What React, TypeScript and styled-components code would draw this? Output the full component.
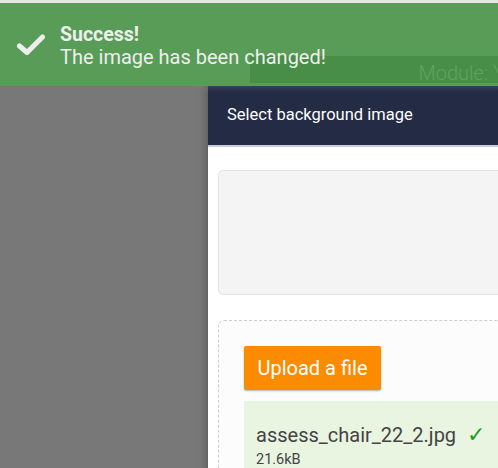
import React from "react";
import styled, { createGlobalStyle } from "styled-components";

const Global = createGlobalStyle`
  html, body { margin: 0; padding: 0; }
  body {
    background: #787878;
    font-family: Roboto, "Liberation Sans", Arial, sans-serif;
    overflow: hidden;
  }
`;

const Screen = styled.div`
  position: relative;
  width: 498px;
  height: 468px;
  overflow: hidden;
  background: #787878;
  border-top: 3px solid #e6e6e6;
  box-sizing: border-box;
`;

const Modal = styled.div`
  position: absolute;
  left: 208px;
  top: 83px;
  width: 340px;
  background: #ffffff;
  box-shadow: 0 0 10px rgba(0, 0, 0, 0.35);
  display: flex;
  flex-direction: column;
`;

const ModalHeader = styled.div`
  flex-shrink: 0;
  height: 61px;
  box-sizing: border-box;
  padding-left: 19px;
  padding-bottom: 3px;
  display: flex;
  align-items: center;
  background: linear-gradient(#3a4258 0px, #232b45 6px, #232b45 100%);
  border-bottom: 2px solid #c9ced8;
  color: #ffffff;
  font-size: 16.5px;
`;

const ModalBody = styled.div`
  padding: 23px 0 0 10px;
  display: flex;
  flex-direction: column;
  gap: 25px;
`;

const Preview = styled.div`
  flex-shrink: 0;
  height: 125px;
  box-sizing: border-box;
  background: #f4f4f4;
  border: 1px solid #e3e3e3;
  border-radius: 5px;
`;

const DropZone = styled.div`
  flex-shrink: 0;
  box-sizing: border-box;
  border: 1px dashed #cfcfcf;
  border-radius: 6px;
  background: #fcfcfc;
  padding: 25px 0 0 25px;
  display: flex;
  flex-direction: column;
  align-items: flex-start;
  gap: 11px;
`;

const UploadButton = styled.button`
  flex-shrink: 0;
  width: 137px;
  height: 44px;
  border: none;
  border-radius: 2px;
  background: #fb8b00;
  color: #ffffff;
  font-family: Roboto, "Liberation Sans", Arial, sans-serif;
  font-size: 20px;
  padding: 0;
  box-shadow: 0 1px 2px rgba(0, 0, 0, 0.3);
  cursor: pointer;
`;

const FileRow = styled.div`
  align-self: stretch;
  background: #e9f5e1;
  padding: 22px 0 0 12px;
  height: 120px;
  display: flex;
  flex-direction: column;
`;

const FileName = styled.div`
  font-size: 20px;
  color: #444444;
  display: flex;
  align-items: center;
  gap: 11px;
  line-height: 24px;
`;

const Check = styled.span`
  color: #1f9a1f;
  font-family: "DejaVu Sans", sans-serif;
  font-size: 22px;
  font-weight: 300;
`;

const FileSize = styled.div`
  font-size: 14.5px;
  color: #444444;
  margin-top: 4px;
`;

const Toast = styled.div`
  position: absolute;
  left: 0;
  top: 0;
  width: 498px;
  height: 83px;
  background: #589c58;
  display: flex;
  align-items: center;
  gap: 14px;
  padding-left: 16px;
  box-sizing: border-box;
  color: #eeeeee;
`;

const UnderBar = styled.div`
  position: absolute;
  left: 250px;
  top: 53px;
  width: 260px;
  height: 27px;
  background: #488d48;
  display: flex;
  justify-content: flex-end;
  align-items: flex-end;
  overflow: hidden;
`;

const UnderText = styled.span`
  color: #5fa35f;
  font-size: 20px;
  font-weight: 300;
  white-space: nowrap;
  margin-right: 5px;
  line-height: 24px;
  margin-bottom: -2px;
`;

const ToastText = styled.div`
  display: flex;
  flex-direction: column;
  position: relative;
  margin-top: 2px;
`;

const ToastTitle = styled.div`
  font-weight: 700;
  font-size: 19.5px;
  line-height: 22px;
`;

const ToastMessage = styled.div`
  font-size: 20px;
  line-height: 22px;
`;

export default function App() {
  return (
    <>
      <Global />
      <Screen>
        <Modal>
          <ModalHeader>Select background image</ModalHeader>
          <ModalBody>
            <Preview />
            <DropZone>
              <UploadButton>Upload a file</UploadButton>
              <FileRow>
                <FileName>
                  assess_chair_22_2.jpg <Check>✓</Check>
                </FileName>
                <FileSize>21.6kB</FileSize>
              </FileRow>
            </DropZone>
          </ModalBody>
        </Modal>
        <Toast>
          <UnderBar>
            <UnderText>Module: Y</UnderText>
          </UnderBar>
          <svg width="30" height="24" viewBox="0 0 30 24">
            <path
              d="M3.5 13 L11 19.5 L26.5 4"
              fill="none"
              stroke="#eeeeee"
              strokeWidth="5"
              strokeLinecap="round"
              strokeLinejoin="round"
            />
          </svg>
          <ToastText>
            <ToastTitle>Success!</ToastTitle>
            <ToastMessage>The image has been changed!</ToastMessage>
          </ToastText>
        </Toast>
      </Screen>
    </>
  );
}
